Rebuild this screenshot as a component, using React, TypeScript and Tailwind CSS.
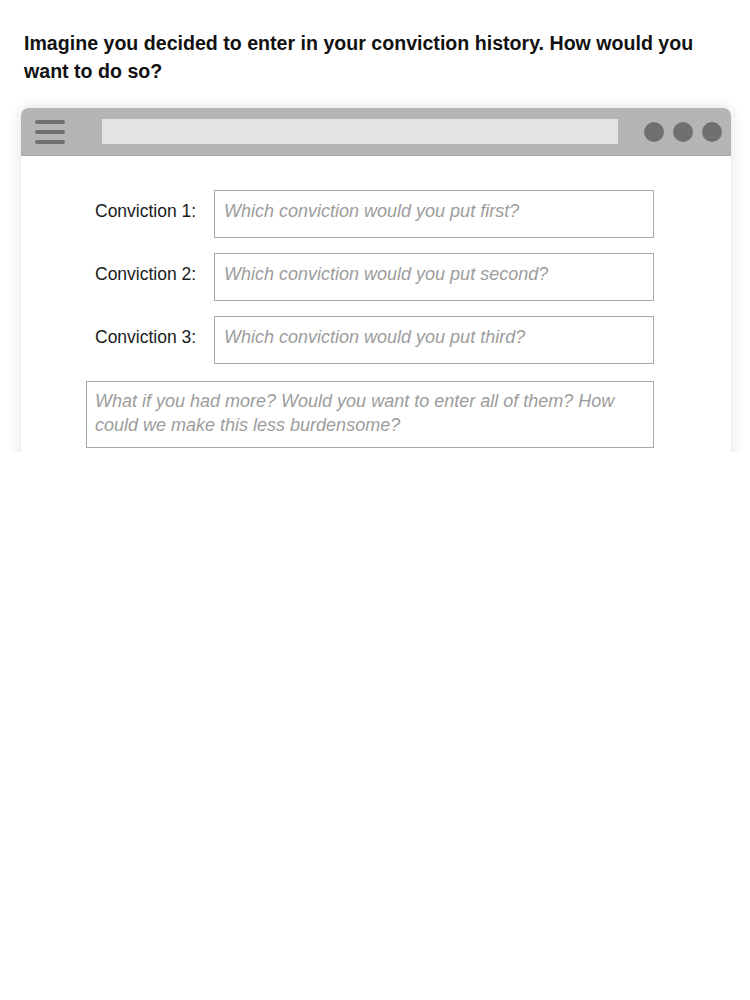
export default function App() {
  const rows = [
    { label: "Conviction 1:", hint: "Which conviction would you put first?" },
    { label: "Conviction 2:", hint: "Which conviction would you put second?" },
    { label: "Conviction 3:", hint: "Which conviction would you put third?" },
  ];

  return (
    <div className="min-h-[1000px] bg-white font-['Liberation_Sans',Arial,sans-serif]">
      {/* Question */}
      <h1 className="pl-[24px] pr-[40px] pt-[29px] text-[19.6px] font-bold leading-[28px] text-[#111]">
        Imagine you decided to enter in your conviction history. How would you
        want to do so?
      </h1>

      {/* Browser mockup, cropped at the bottom */}
      <div className="mt-[10px] h-[357px] overflow-hidden pl-[21px] pr-[19px] pt-[13px]">
        <div className="flex h-[400px] flex-col rounded-t-[8px] bg-white shadow-[0_0_14px_rgba(0,0,0,0.13)]">
          {/* Top bar */}
          <div className="flex h-[48px] items-center rounded-t-[8px] border-b border-[#a9a9a9] bg-[#b5b5b5] pl-[14px] pr-[9px]">
            <div className="flex w-[30px] flex-col gap-[6px]">
              <div className="h-[4px] rounded-full bg-[#707070]" />
              <div className="h-[4px] rounded-full bg-[#707070]" />
              <div className="h-[4px] rounded-full bg-[#707070]" />
            </div>
            <div className="ml-[37px] h-[25px] w-[516px] bg-[#e4e4e4]" />
            <div className="ml-auto flex gap-[9px]">
              <div className="h-[20px] w-[20px] rounded-full bg-[#707070]" />
              <div className="h-[20px] w-[20px] rounded-full bg-[#707070]" />
              <div className="h-[20px] w-[20px] rounded-full bg-[#707070]" />
            </div>
          </div>

          {/* Form */}
          <div className="flex flex-col pt-[34px]">
            {rows.map((r, i) => (
              <div key={i} className={`flex items-center ${i > 0 ? "mt-[15px]" : ""}`}>
                <span className="w-[193px] pb-[6px] pl-[74px] text-[17.5px] text-[#1a1a1a]">{r.label}</span>
                <div className="flex h-[48px] w-[440px] items-center border border-[#a8a8a8] pb-[6px] pl-[9px] text-[18px] italic text-[#9c9c9c]">
                  {r.hint}
                </div>
              </div>
            ))}
            <div className="ml-[65px] mt-[17px] h-[67px] w-[568px] border border-[#a8a8a8] px-[8px] pt-[7px] text-[18px] italic leading-[24px] text-[#9c9c9c]">
              What if you had more? Would you want to enter all of them? How
              could we make this less burdensome?
            </div>
          </div>
        </div>
      </div>
    </div>
  );
}
